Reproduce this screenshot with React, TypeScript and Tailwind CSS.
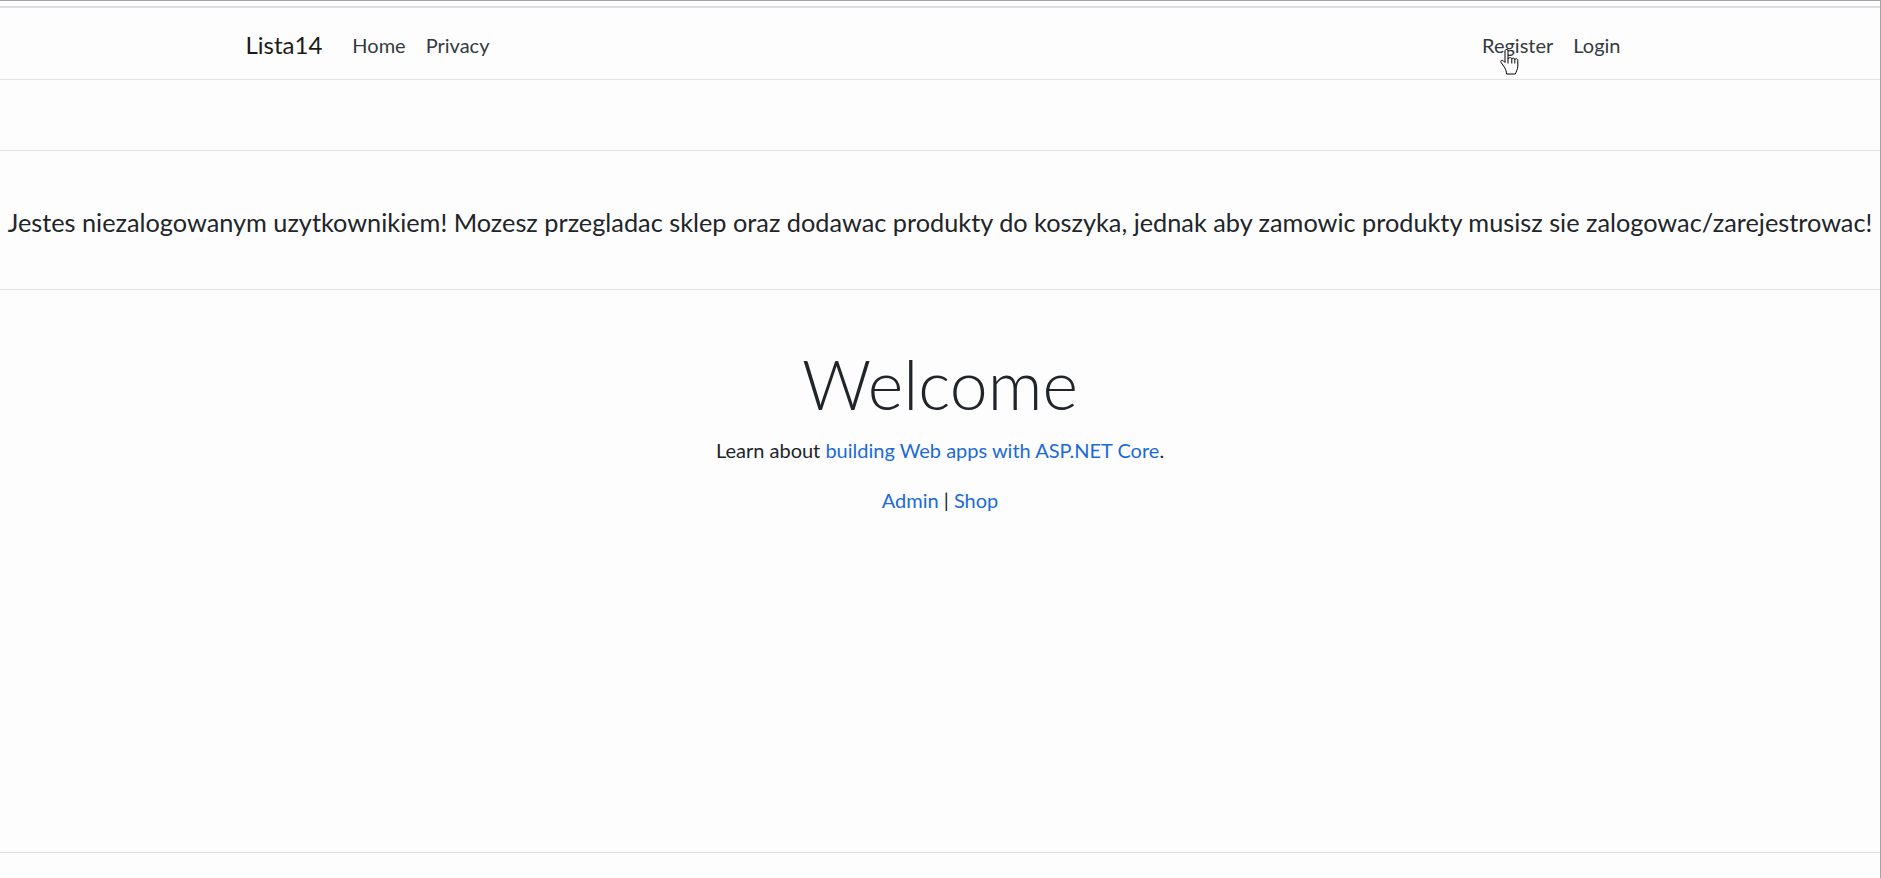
import React from "react";

const FONT = "font-['Lato','Open_Sans',sans-serif]";

function HandCursor() {
  return (
    <svg
      width="19"
      height="26"
      viewBox="0 0 19 26"
      className="pointer-events-none absolute left-[1500px] top-[48px]"
      aria-hidden="true"
    >
      <path
        d="M6.5 0.5C5.6 0.5 5 1.2 5 2V13.5L3.3 11.8C2.5 11 1.3 11.1 0.9 11.9C0.6 12.5 0.8 13.2 1.3 13.8L4.8 18.8C5.8 20.6 6.3 22.3 6.6 25H15.4C15.9 22.8 17.8 20.3 17.8 17.2V11.2C17.8 10.3 17.1 9.7 16.3 9.7C15.5 9.7 14.8 10.3 14.8 11.2V10.6C14.8 9.7 14.1 9.1 13.3 9.1C12.5 9.1 11.8 9.7 11.8 10.6V10.1C11.8 9.2 11.1 8.6 10.3 8.6C9.5 8.6 8 9.1 8 10V2C8 1.2 7.4 0.5 6.5 0.5Z"
        fill="#fff"
        stroke="#000"
        strokeWidth="1"
        strokeLinejoin="round"
      />
      <path d="M8 10V14.5M11.8 10.6V14.5M14.8 11.2V14.5" stroke="#000" strokeWidth="1" fill="none" />
    </svg>
  );
}

export default function App() {
  return (
    <div
      className={`relative flex h-[878px] w-full flex-col overflow-hidden border-r border-t border-[#a3a3a3] bg-[#fdfdfd] text-[#212529] ${FONT}`}
    >
      <div className="mt-[5px] h-[2px] bg-[#dcdce2]" />

      <nav className="h-[72px] border-b border-[#e3e3e3]">
        <div className="mx-auto flex h-full w-[1425px] items-center pl-[18px] pr-[22px] pt-[2px]">
          <a className="mr-[20px] text-[24px] leading-none text-[#1a1a1a]">Lista14</a>
          <ul className="flex items-center text-[20px] leading-none text-[#343a40]">
            <li className="px-[10px]">Home</li>
            <li className="px-[10px]">Privacy</li>
          </ul>
          <ul className="ml-auto flex items-center text-[20px] leading-none text-[#343a40]">
            <li className="px-[10px]">Register</li>
            <li className="px-[10px]">Login</li>
          </ul>
        </div>
      </nav>

      <main className="flex-1">
        <div className="mt-[70px] flex h-[140px] items-center justify-center border-y border-[#e3e3e3] pt-[6px]">
          <p className="whitespace-nowrap text-[25.3px] leading-none">
            Jestes niezalogowanym uzytkownikiem! Mozesz przegladac sklep oraz dodawac produkty do koszyka, jednak aby zamowic produkty musisz sie zalogowac/zarejestrowac!
          </p>
        </div>

        <div className="mt-[53px] flex flex-col items-center text-center">
          <h1 className="text-[68px] font-light leading-[1.2]">Welcome</h1>
          <p className="mt-[10px] text-[20px] leading-[1.5]">
            Learn about <a className="text-[#1b6ad8]">building Web apps with ASP.NET Core</a>.
          </p>
          <p className="mt-[20px] text-[20px] leading-[1.5]">
            <a className="text-[#1b6ad8]">Admin</a> | <a className="text-[#1b6ad8]">Shop</a>
          </p>
        </div>
      </main>

      <footer className="h-[26px] border-t border-[#dcdce2]" />

      <HandCursor />
    </div>
  );
}
